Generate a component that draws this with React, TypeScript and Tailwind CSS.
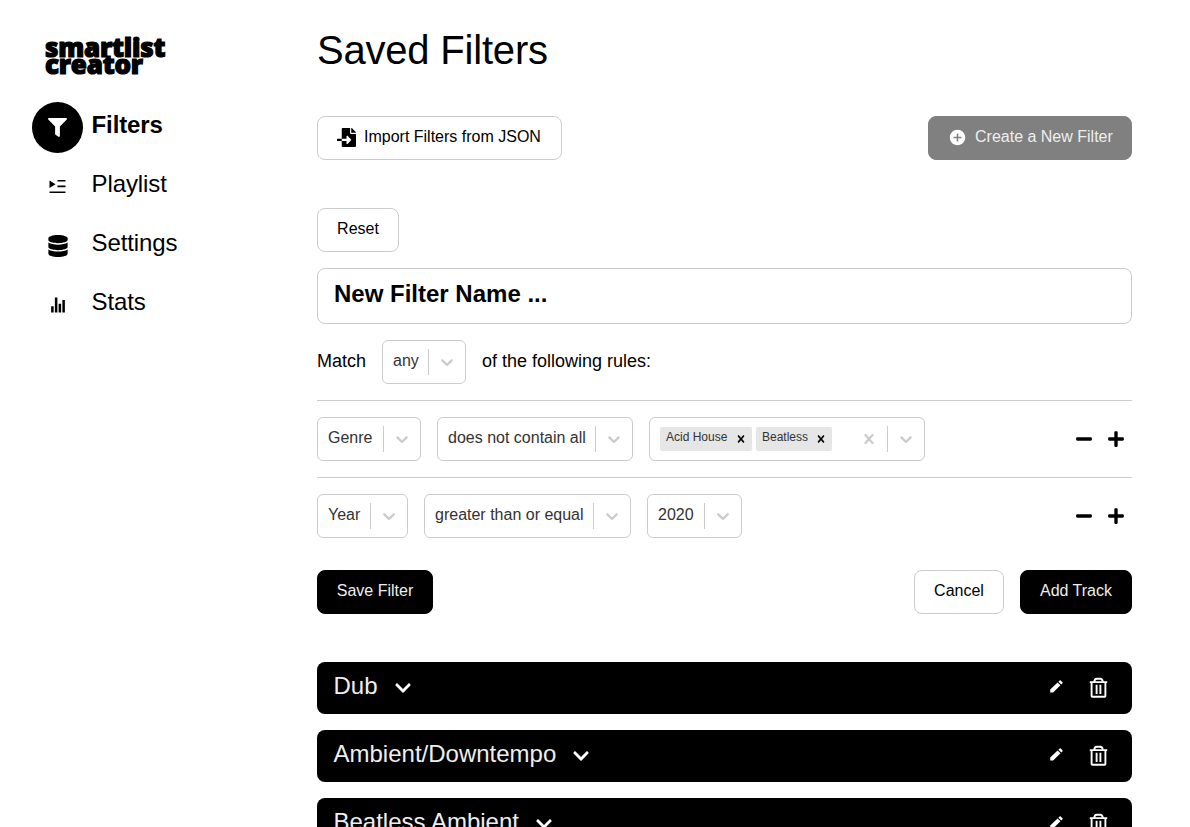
import type { ReactNode } from "react";
import { FaFilter, FaDatabase, FaChevronDown, FaMinus, FaPlus, FaFileImport } from "react-icons/fa";
import { IoIosStats, IoMdAddCircle } from "react-icons/io";

function PlaylistIcon() {
  return (
    <svg width="17" height="16" viewBox="0.5 0 17 16" fill="currentColor">
      <path d="M1 1.5v7.4L7 5.2zM9 1h8v1.6H9zM9 6.6h8v1.6H9zM1 12.4h16v1.7H1z" />
    </svg>
  );
}

function PencilIcon() {
  return (
    <svg width="13" height="13" viewBox="0 0 13 13" fill="currentColor">
      <path d="M0.2 9.5L7.6 2.4L10.5 5.3L3.1 12.5H0.2zM8.4 1.7L9.7 0.5Q10.2 0.1 10.7 0.5L12.5 2.2Q12.9 2.7 12.5 3.2L11.3 4.5z" />
    </svg>
  );
}

function TrashIcon() {
  return (
    <svg width="19" height="22" viewBox="0 0 19 22" fill="none" stroke="currentColor" strokeWidth="1.9">
      <path d="M0.8 5.1h17.4M2.6 5v13.9q0 .8.8.8h12.2q.8 0 .8-.8V5M5.3 4.6q.2-2.9 2.5-2.9h3.4q2.3 0 2.5 2.9M7.6 7.8v9.2M11.4 7.8v9.2" />
    </svg>
  );
}

function NavItem({ icon, label, active }: { icon: ReactNode; label: string; active?: boolean }) {
  return (
    <a className="flex h-[51px] items-center gap-[8.5px]">
      <span className={active ? "flex size-[51px] items-center justify-center rounded-full bg-black text-white" : "flex size-[51px] items-center justify-center"}>{icon}</span>
      <span className={active ? "pb-[5px] text-2xl font-bold tracking-[-0.1px]" : "pb-[5px] text-2xl tracking-[-0.1px]"}>{label}</span>
    </a>
  );
}

function Button({ children, className }: { children: ReactNode; className: string }) {
  return <button className={"flex h-11 shrink-0 items-center rounded-lg border pb-[3px] whitespace-nowrap " + className}>{children}</button>;
}

function Chevron() {
  return (
    <span className="flex h-[26px] w-[37px] shrink-0 items-center justify-center border-l border-[#ccc] text-[#ccc]">
      <svg width="20" height="20" viewBox="0 0 20 20" fill="currentColor">
        <path d="M4.516 7.548c0.436-0.446 1.043-0.481 1.576 0l3.908 3.747 3.908-3.747c0.533-0.481 1.141-0.446 1.574 0 0.436 0.445 0.408 1.197 0 1.615-0.406 0.418-4.695 4.502-4.695 4.502-0.217 0.223-0.502 0.335-0.787 0.335s-0.57-0.112-0.789-0.335c0 0-4.287-4.084-4.695-4.502s-0.436-1.17 0-1.615z" />
      </svg>
    </span>
  );
}

function Cross({ size }: { size: number }) {
  return (
    <svg width={size} height={size} viewBox="0 0 20 20" fill="currentColor">
      <path d="M14.348 14.849c-0.469 0.469-1.229 0.469-1.697 0l-2.651-3.030-2.651 3.029c-0.469 0.469-1.229 0.469-1.697 0-0.469-0.469-0.469-1.229 0-1.697l2.758-3.15-2.759-3.152c-0.469-0.469-0.469-1.228 0-1.697s1.228-0.469 1.697 0l2.652 3.031 2.651-3.031c0.469-0.469 1.228-0.469 1.697 0s0.469 1.229 0 1.697l-2.758 3.152 2.758 3.15c0.469 0.469 0.469 1.229 0 1.698z" />
    </svg>
  );
}

function Select({ value, className }: { value: string; className: string }) {
  return (
    <div className={"flex h-11 items-center justify-between rounded-md border border-[#ccc] pl-[10px] text-[#333] " + className}>
      <span className="pb-[3px] whitespace-nowrap">{value}</span>
      <Chevron />
    </div>
  );
}

function Tag({ label, className }: { label: string; className: string }) {
  return (
    <span className={"flex h-6 shrink-0 items-center justify-between rounded-xs bg-[#e6e6e6] pr-1 pl-1.5 text-xs text-[#333] " + className}>
      <span className="pb-1">{label}</span>
      <span className="text-black"><Cross size={14} /></span>
    </span>
  );
}

function Rule({ children }: { children: ReactNode }) {
  return (
    <div className="flex h-[77px] shrink-0 items-center gap-4 border-t border-[#ccc]">
      {children}
      <div className="ml-auto flex gap-3.5 pr-[7px]">
        <FaMinus size={18} />
        <FaPlus size={18} />
      </div>
    </div>
  );
}

function FilterBar({ name }: { name: string }) {
  return (
    <div className="flex h-[52px] shrink-0 items-center rounded-lg bg-black pr-6 pl-[16.5px] text-white">
      <span className="pb-[5px] text-2xl text-[#eee]">{name}</span>
      <FaChevronDown size={18} className="ml-4" />
      <span className="mr-[26px] ml-auto pb-1"><PencilIcon /></span>
      <TrashIcon />
    </div>
  );
}

export default function App() {
  return (
    <div className="flex h-[827px] w-[1190px] overflow-hidden bg-white font-['Liberation_Sans',sans-serif] text-base text-black">
      <aside className="flex w-[317px] shrink-0 flex-col pl-8">
        <div className="mt-[39px] mb-[-1px] ml-[13px] flex h-10 flex-col font-['Open_Sans',sans-serif] text-[26px] leading-[17px] font-extrabold tracking-[-0.2px] [-webkit-text-stroke:1.2px_black]">
          <span>smartlist</span>
          <span>creator</span>
        </div>
        <nav className="mt-6 flex flex-col gap-2">
          <NavItem active icon={<FaFilter size={19} />} label="Filters" />
          <NavItem icon={<PlaylistIcon />} label="Playlist" />
          <NavItem icon={<FaDatabase size={22} />} label="Settings" />
          <NavItem icon={<IoIosStats size={20} />} label="Stats" />
        </nav>
      </aside>
      <main className="flex w-[815px] flex-col">
        <h1 className="mt-[26px] shrink-0 text-[40px] leading-[48px] tracking-[-0.2px]">Saved Filters</h1>
        <div className="mt-[42px] flex shrink-0 justify-between">
          <Button className="w-[245px] border-[#ccc] pl-[19px]">
            <FaFileImport size={19} className="mt-0.5 mr-2" />
            Import Filters from JSON
          </Button>
          <Button className="w-[204px] border-[#808080] bg-[#808080] pl-[19px] text-[#eee]">
            <IoMdAddCircle size={19} className="mt-0.5 mr-2 text-white" />
            Create a New Filter
          </Button>
        </div>
        <Button className="mt-12 w-[82px] justify-center border-[#ccc]">Reset</Button>
        <div className="mt-4 flex h-14 shrink-0 items-center rounded-lg border border-[#ccc] pb-1 pl-4 text-2xl font-bold">New Filter Name ...</div>
        <div className="mt-4 mb-4 flex shrink-0 items-center gap-4 text-lg">
          <span className="w-[49px] pb-0.5">Match</span>
          <Select value="any" className="w-[84px] text-base" />
          <span className="pb-0.5">of the following rules:</span>
        </div>
        <Rule>
          <Select value="Genre" className="w-[104px]" />
          <Select value="does not contain all" className="w-[196px]" />
          <div className="flex h-11 w-[276px] items-center gap-1 rounded-md border border-[#ccc] pl-[10px]">
            <Tag label="Acid House" className="w-[92px]" />
            <Tag label="Beatless" className="w-[76px]" />
            <span className="mr-1 ml-auto text-[#ccc]"><Cross size={20} /></span>
            <Chevron />
          </div>
        </Rule>
        <Rule>
          <Select value="Year" className="w-[91px]" />
          <Select value="greater than or equal" className="w-[207px]" />
          <Select value="2020" className="w-[95px]" />
        </Rule>
        <div className="mt-4 flex shrink-0 gap-4">
          <Button className="mr-auto w-[116px] justify-center border-black bg-black text-[#eee]">Save Filter</Button>
          <Button className="w-[90px] justify-center border-[#ccc]">Cancel</Button>
          <Button className="w-[112px] justify-center border-black bg-black text-[#eee]">Add Track</Button>
        </div>
        <div className="mt-12 flex flex-col gap-4">
          <FilterBar name="Dub" />
          <FilterBar name="Ambient/Downtempo" />
          <FilterBar name="Beatless Ambient" />
        </div>
      </main>
    </div>
  );
}
